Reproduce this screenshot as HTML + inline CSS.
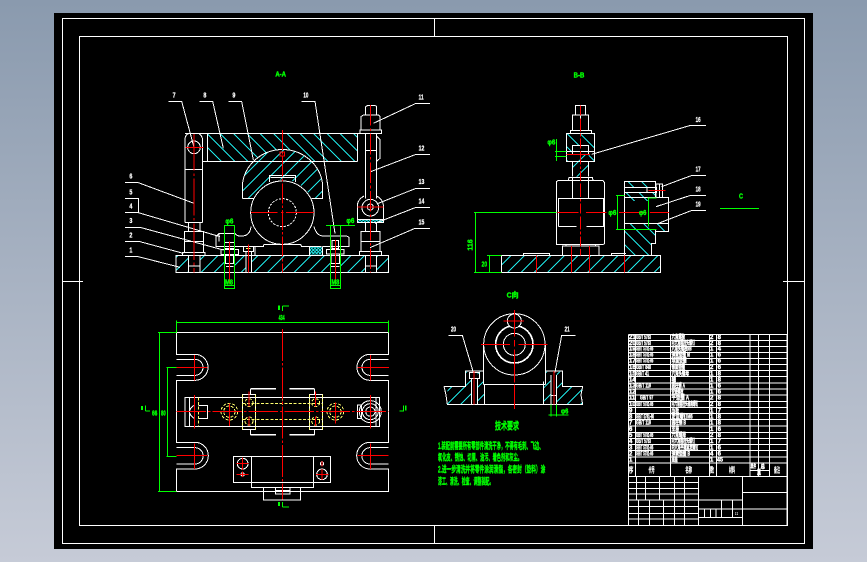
<!DOCTYPE html>
<html lang="zh"><head><meta charset="utf-8"><title>CAD</title>
<style>
html,body{margin:0;padding:0;width:867px;height:562px;overflow:hidden;background:linear-gradient(#8a9aae,#c6cbd7)}
svg{position:absolute;left:0;top:0;display:block;shape-rendering:crispEdges}
.w{stroke:#fff;fill:none;stroke-width:3}
.c{stroke:#1fe6e6;fill:none;stroke-width:3}
.r{stroke:#f00;fill:none;stroke-width:3}
.g{stroke:#0f0;fill:none;stroke-width:3}
.y{stroke:#ffff70;fill:none;stroke-width:3;stroke-dasharray:9 5}
.rd{stroke-dasharray:110 8 8 8}
text{font-family:"Liberation Sans","Noto Sans CJK SC",sans-serif;font-weight:bold}
.tg{fill:#0f0;font-size:22px;stroke:#0f0;stroke-width:1.2}
.tw{fill:#fff;font-size:22px;stroke:#fff;stroke-width:.8}
.b{fill:#fff;font-size:18px;stroke:#fff;stroke-width:1.2}
</style></head><body>
<svg width="867" height="562" viewBox="0 0 867 562" xmlns="http://www.w3.org/2000/svg">
<defs>
<path id="Lf" class="c" d="M160 200l-460 460M200 200l-460 460M240 200l-460 460M280 200l-460 460M320 200l-460 460M360 200l-460 460M400 200l-460 460M440 200l-460 460M480 200l-460 460M520 200l-460 460M560 200l-460 460M600 200l-460 460M640 200l-460 460M680 200l-460 460M720 200l-460 460M760 200l-460 460M800 200l-460 460M840 200l-460 460M880 200l-460 460M920 200l-460 460M960 200l-460 460M1000 200l-460 460M1040 200l-460 460M1080 200l-460 460M1120 200l-460 460M1160 200l-460 460M1200 200l-460 460M1240 200l-460 460"/>
<path id="Lb" class="c" d="M120 200l460 460M160 200l460 460M200 200l460 460M240 200l460 460M280 200l460 460M320 200l460 460M360 200l460 460M400 200l460 460M440 200l460 460M480 200l460 460M520 200l460 460M560 200l460 460M600 200l460 460M640 200l460 460M680 200l460 460M720 200l460 460"/>
<pattern id="hx" width="10" height="10" patternUnits="userSpaceOnUse"><path d="M0 10L10 0M0 0L10 10" stroke="#1fe6e6" stroke-width="2.5"/></pattern>
<clipPath id="a1"><rect x="168" y="586" width="638" height="51"/></clipPath>
<clipPath id="a2"><rect x="262" y="220" width="450" height="84"/></clipPath>
<clipPath id="a3"><path d="M367 415V375A121 117 0 0 1 608 375V415H574A95 95 0 0 0 400 415Z"/></clipPath>
<clipPath id="b1"><rect x="184" y="586" width="478" height="51"/></clipPath>
<clipPath id="b2"><path d="M379 220H464V304H446V256H397V304H379Z"/></clipPath>
<clipPath id="b3"><rect x="397" y="283" width="49" height="67"/></clipPath>
<clipPath id="b4"><path d="M553 365H646V383H553ZM553 397H646V423H553Z"/></clipPath>
<clipPath id="b5"><path d="M553 490H686V515H646V550H634V585H553Z"/></clipPath>
<clipPath id="s1"><path d="M82 304H155V358H82ZM173 304H193V358H173ZM136 260H155V304H136ZM173 260H190V304H173Z"/></clipPath>
<clipPath id="s2"><path d="M370 304H393V358H370ZM410 304H488V358H410ZM376 260H393V304H376ZM410 260H428V304H410Z"/></clipPath>
</defs>
<rect x="54" y="13" width="759" height="536" fill="#000"/>
<g fill="none" stroke="#fff" stroke-width="1">
<path d="M62.5 18.500H804.500V543.500H62.500Z"/>
<path d="M79.500 36.500H787.500V525.500H79.500Z"/>
<path d="M434.500 18V36M434.500 525V543M62 281.500H83M783 281.500H804"/>
</g>

<!-- FRONT VIEW A-A -->
<g transform="translate(120 60) scale(.33333)">
<g clip-path="url(#a1)"><use href="#Lf"/></g>
<g clip-path="url(#a2)"><use href="#Lb"/></g>
<path d="M367 415V375A121 117 0 0 1 608 375V415H574A95 95 0 0 0 400 415Z" fill="#000"/>
<g clip-path="url(#a3)"><use href="#Lf"/></g>
<rect x="205" y="586" width="36" height="51" fill="#000"/>
<rect x="313" y="586" width="30" height="51" fill="#000"/>
<rect x="631" y="586" width="30" height="51" fill="#000"/>
<rect x="378" y="586" width="16" height="51" fill="#000"/>
<rect x="737" y="586" width="33" height="51" fill="#000"/>
<rect x="568" y="560" width="39" height="23" fill="url(#hx)"/>
<rect x="712" y="478" width="78" height="10" fill="url(#hx)"/>
<path class="w" d="M168 586H806V637H168Z"/>
<path class="w" d="M195 220H780M262 220V304M712 220V304M248 304H712"/>
<path class="w" d="M195 488V235Q197 222 210 220M248 488V238Q246 226 235 220M195 488H248M195 328H248"/>
<circle class="w" cx="222" cy="262" r="19"/>
<path class="w" d="M367 415H400M574 415H608V375A121 117 0 0 0 367 375V415"/>
<circle class="w" cx="487" cy="458" r="95"/>
<circle class="w" cx="487" cy="458" r="42" stroke-dasharray="7 4"/>
<path class="w" d="M448 366V347H527V366M452 352H523"/>
<path class="w" d="M393 500Q390 528 365 528Q352 530 345 520H298L288 530V560H345M345 560H430L432 553H542L545 560H605M582 500Q590 528 610 528H680L687 532V560H607"/>
<path class="w" d="M405 560V586M568 560V586M607 560V586M297 520V545"/>
<!-- right stud -->
<path class="w" d="M737 165V140L742 137H766L770 140V165M723 210V170L730 165H775L780 170V210M720 210H785V220H720ZM737 220V415M770 220V415M737 272H770M770 228L780 238V295L770 304"/>
<path class="w" d="M712 478V435Q714 418 732 408M790 478V435Q788 418 770 408M712 478H790V488H712Z"/>
<circle class="w" cx="751" cy="443" r="25"/>
<circle class="w" cx="751" cy="441" r="9"/>
<path class="w" d="M737 488V515M770 488V515M723 515H780V575H723ZM723 545H780M718 575H785V586H718ZM737 586V637M770 586V637M737 618H770"/>
<!-- left stud -->
<path class="w" d="M205 488V515M240 488V515M193 515H250V578H193ZM193 545H250M188 578H255V586H188ZM205 586V637M240 586V637M205 618H240"/>
<!-- bolts -->
<path class="w" d="M313 547H343V565H313ZM303 568H355V583H303ZM317 583V610H340V583M318 620H340"/>
<path class="w" d="M636 541H656V565H636ZM620 568H672V582H620ZM633 583V610H659V583M633 620H659"/>
<path class="w" d="M370 560H400V575H370ZM378 575V637M394 575V637"/>
<path class="y" d="M378 566H392" style="stroke-dasharray:none"/>
<!-- leaders -->
<path class="w" d="M145 124H185L222 262M238 124H278L310 265M325 124H365L400 300M545 124H585L645 520M930 130H888L760 190M930 283H888L752 335M930 385H888L770 432M930 442H888L765 490M930 505H885L750 563M15 368H55L222 430M15 415H55V458H15M55 458L300 530M15 502H60L310 570M15 545H60L190 580M15 590H55L180 622"/>
<!-- red -->
<path class="r" d="M487 210V637" stroke-dasharray="60 6 8 6"/>
<path class="r rd" d="M222 222V637"/>
<path class="r" d="M751 135V637" stroke-dasharray="62 8 8 8"/>
<path class="r" d="M197 262H250M393 458H473M483 458H490M498 458H582M712 441H790M328 545V670M646 540V670M385 553V637"/>
<rect x="480" y="276" width="14" height="12" fill="none" stroke="#f00" stroke-width="3"/>
<!-- green -->
<path class="g" d="M313 496H343V685H313ZM313 677H343M631 496V685H661V496M631 677H661M618 496H705"/>
<text class="tg" x="466" y="50" textLength="32" lengthAdjust="spacingAndGlyphs">A-A</text>
<text class="tg" x="316" y="490" textLength="24" lengthAdjust="spacingAndGlyphs">φ6</text>
<text class="tg" x="679" y="489" textLength="24" lengthAdjust="spacingAndGlyphs">φ6</text>
<text class="tg" x="315" y="674" textLength="24" lengthAdjust="spacingAndGlyphs">M8</text>
<text class="tg" x="634" y="674" textLength="24" lengthAdjust="spacingAndGlyphs">M8</text>
<text class="tw" x="158" y="112" textLength="9" lengthAdjust="spacingAndGlyphs">7</text><text class="tw" x="250" y="112" textLength="9" lengthAdjust="spacingAndGlyphs">8</text><text class="tw" x="337" y="112" textLength="9" lengthAdjust="spacingAndGlyphs">9</text>
<text class="tw" x="550" y="112" textLength="15" lengthAdjust="spacingAndGlyphs">10</text>
<text class="tw" x="896" y="119" textLength="15" lengthAdjust="spacingAndGlyphs">11</text>
<text class="tw" x="896" y="272" textLength="17" lengthAdjust="spacingAndGlyphs">12</text>
<text class="tw" x="896" y="372" textLength="17" lengthAdjust="spacingAndGlyphs">13</text>
<text class="tw" x="896" y="431" textLength="17" lengthAdjust="spacingAndGlyphs">14</text>
<text class="tw" x="896" y="493" textLength="17" lengthAdjust="spacingAndGlyphs">15</text>
<text class="tw" x="28" y="355" textLength="9" lengthAdjust="spacingAndGlyphs">6</text><text class="tw" x="28" y="403" textLength="9" lengthAdjust="spacingAndGlyphs">5</text><text class="tw" x="28" y="446" textLength="9" lengthAdjust="spacingAndGlyphs">4</text>
<text class="tw" x="28" y="489" textLength="9" lengthAdjust="spacingAndGlyphs">3</text><text class="tw" x="28" y="532" textLength="9" lengthAdjust="spacingAndGlyphs">2</text><text class="tw" x="28" y="578" textLength="9" lengthAdjust="spacingAndGlyphs">1</text>
</g>

<!-- SIDE VIEW B-B -->
<g transform="translate(440 60) scale(.33333)">
<g clip-path="url(#b1)"><use href="#Lf"/></g>
<g clip-path="url(#b2)"><use href="#Lb"/></g>
<g clip-path="url(#b3)"><use href="#Lf"/></g>
<g clip-path="url(#b4)"><use href="#Lb"/></g>
<g clip-path="url(#b5)"><use href="#Lb"/></g>
<path class="w" d="M184 586H662V637H184ZM250 586V580H329V586M514 586V580H558"/>
<path class="w" d="M367 586V558H477V586M378 558V553M466 558V553M349 553V365L355 361H385L387 352H457L459 361H488L494 368V550L490 553H352ZM386 361H459"/>
<path class="w" d="M355 500V415H491V500H440M410 500H355M397 415V352M446 415V352"/>
<path class="w" d="M379 220H464V304H379ZM397 304V350M446 304V350M397 283V256H446V283M380 274H464M397 210V165H446V210M391 210V220M455 210V220M391 211H455M407 165V137H437V165M421 165V210"/>
<path class="w" d="M553 585V365H646V412M553 383H646M553 397H646M553 412H686V515H646M553 490H686M553 508H646V550H634V585M621 383H650V397H621ZM648 372H668V412H648ZM658 372V412"/>
<path class="w" d="M798 196H752L455 283M798 346H756L665 380M798 406H752L648 440M798 451H756L650 492"/>
<path class="r" d="M421 137V586" stroke-dasharray="30 8 40 6 8 6"/>
<path class="r" d="M380 284H450M352 457H415M438 457H500M537 457H620M630 457H687M625 391H676M290 586V637M394 558V637M448 558V637M553 586V637"/>
<path class="g" d="M106 457V637M102 457H350M102 637H184M141 586H184M148 586V637M349 237V303M345 274H380M345 289H380M532 406V508M528 406H553M528 508H650M625 412V500M622 414H650M840 445H957"/>
<text class="tg" x="401" y="52" textLength="32" lengthAdjust="spacingAndGlyphs">B-B</text>
<text class="tg" x="322" y="254" textLength="24" lengthAdjust="spacingAndGlyphs">φ6</text>
<text class="tg" x="505" y="465" textLength="24" lengthAdjust="spacingAndGlyphs">φ6</text>
<text class="tg" x="597" y="465" textLength="22" lengthAdjust="spacingAndGlyphs">φ6</text>
<text class="tg" x="125" y="620" textLength="16" lengthAdjust="spacingAndGlyphs">20</text>
<text class="tg" transform="translate(98 572) rotate(-90)" textLength="34" lengthAdjust="spacingAndGlyphs">116</text>
<text class="tg" x="897" y="416" textLength="12" lengthAdjust="spacingAndGlyphs">C</text>
<text class="tw" x="767" y="186" textLength="15" lengthAdjust="spacingAndGlyphs">16</text>
<text class="tw" x="767" y="335" textLength="15" lengthAdjust="spacingAndGlyphs">17</text>
<text class="tw" x="767" y="395" textLength="15" lengthAdjust="spacingAndGlyphs">18</text>
<text class="tw" x="767" y="440" textLength="15" lengthAdjust="spacingAndGlyphs">19</text>
</g>

<!-- PLAN VIEW -->
<g transform="translate(130 300) scale(.33333)">
<path class="w" d="M139 97H775V163H720A39 39 0 0 0 720 241H775V427H720A40 40 0 0 0 720 507H775V574H139V507H195A40 40 0 0 0 195 427H139V241H195A39 39 0 0 0 195 163H139Z"/>
<path class="w" d="M139 178H195A24 24 0 0 1 195 226H139M139 443H195A24 24 0 0 1 195 492H139M775 178H720A24 24 0 0 0 720 226H775M775 443H720A24 24 0 0 0 720 492H775"/>
<path class="w" d="M165 292H749V380H165ZM178 292V380M205 316H233V355H205M192 316Q165 335 192 355M682 315H695V355H682ZM738 292V380"/>
<path class="w" d="M362 267H438M478 267H553M362 405H438M478 405H553M362 267V283M553 267V283M362 388V405M553 388V405M337 283H377V388H337ZM538 283H577V388H538Z"/>
<path d="M362 266H438M478 266H553M362 404H438M478 404H553" stroke="#fff" stroke-width="3"/>
<circle class="w" cx="721" cy="335" r="33"/><circle class="w" cx="721" cy="335" r="24"/><circle class="w" cx="721" cy="335" r="14"/>
<path class="y" d="M337 310H577M337 358H577M337 283V388M377 283V388M538 283V388M577 283V388M205 292V380M457 292V380"/>
<circle class="y" cx="298" cy="335" r="25"/><circle class="y" cx="298" cy="335" r="17"/>
<circle class="y" cx="616" cy="335" r="25"/><circle class="y" cx="616" cy="335" r="17"/>
<circle class="y" cx="357" cy="308" r="12"/><circle class="y" cx="357" cy="363" r="12"/>
<circle class="y" cx="557" cy="308" r="12"/><circle class="y" cx="557" cy="363" r="12"/>
<path class="w" d="M310 469H602V547H310ZM365 469V562H550V469M400 563H512V600H400ZM436 563V582H480V563M436 572H480"/>
<circle class="w" cx="338" cy="491" r="16"/><circle class="w" cx="576" cy="523" r="16"/>
<circle class="w" cx="338" cy="523" r="5"/><circle class="w" cx="576" cy="491" r="5"/>
<path class="r" d="M457 87V598" stroke-dasharray="96 6 8 6"/>
<path class="r" d="M140 335H775" stroke-dasharray="88 6 8 6"/>
<path class="r" d="M193 165V241M193 285V385M193 430V507M721 165V241M721 285V385M721 430V507M140 202H233M682 202H777M140 467H233M682 467H775M298 310V378M616 307V370M357 275V320M357 350V378M557 275V320M557 350V378M320 491H355M338 473V510M320 523H355M338 515V531M576 483V500M558 523H596M576 507V540"/>
<path class="g" d="M139 67H775M139 62V97M775 62V97M88 97V574M84 97H139M84 574H139M112 202V469M109 202H139M109 469H139M457 18H477M457 18V33M457 621H477M457 606V621M46 333H60M46 316V333M808 333H821V316"/>
<path d="M447 16V30M447 606V618M36 318V330M827 316V332" stroke="#0f0" stroke-width="5"/>
<text class="tg" x="446" y="60" textLength="18" lengthAdjust="spacingAndGlyphs">434</text>
<text class="tg" x="66" y="346" textLength="16" lengthAdjust="spacingAndGlyphs">66</text>
<text class="tg" x="93" y="346" textLength="14" lengthAdjust="spacingAndGlyphs">80</text>
</g>

<!-- SECTION C -->
<g transform="translate(420 285) scale(.33333)">
<g clip-path="url(#s1)"><use href="#Lf"/></g>
<g clip-path="url(#s2)"><use href="#Lf"/></g>
<circle class="w" cx="283" cy="178" r="92"/>
<circle class="w" cx="283" cy="178" r="57"/><circle class="w" cx="283" cy="178" r="55"/>
<circle class="w" cx="283" cy="178" r="33"/>
<circle cx="283" cy="108" r="21" fill="#000" stroke="#fff" stroke-width="3"/>
<path class="w" d="M190 178V298M376 178V298M190 298H376M193 298V358M370 290V358"/>
<path class="w" d="M72 304H136V258H190M376 258H428V304H488L483 330L488 358H82L78 330L72 304M155 282V358M173 282V358M393 270V358M410 270V358M393 332H410M148 262H178V280H148Z"/>
<path class="w" d="M85 151H127L160 262M467 151H425L405 262"/>
<path class="r" d="M283 75V372" stroke-dasharray="80 10 20 8 100 6"/>
<path class="r" d="M250 108H312M183 178H270M295 178H383M162 258V358M402 258V358"/>
<path class="g" d="M386 390H446M393 358V395M410 358V395"/>
<text class="tg" x="423" y="385" textLength="22" lengthAdjust="spacingAndGlyphs">φ6</text>
<text class="tg" x="260" y="38" textLength="36" lengthAdjust="spacingAndGlyphs">C向</text>
<text class="tw" x="93" y="139" textLength="15" lengthAdjust="spacingAndGlyphs">20</text>
<text class="tw" x="434" y="139" textLength="15" lengthAdjust="spacingAndGlyphs">21</text>
<text class="tg" x="225" y="434" style="font-size:30px" textLength="72" lengthAdjust="spacingAndGlyphs">技术要求</text>
<text class="tg" x="54" y="492" style="font-size:28px" textLength="316" lengthAdjust="spacingAndGlyphs">1.装配前需要所有零部件清洗干净，不得有毛刺、飞边、</text>
<text class="tg" x="54" y="527" style="font-size:28px" textLength="252" lengthAdjust="spacingAndGlyphs">氧化皮、锈蚀、切屑、油污、着色剂和灰尘。</text>
<text class="tg" x="54" y="562" style="font-size:28px" textLength="322" lengthAdjust="spacingAndGlyphs">2.进一步清洗并将零件涂润滑脂，各密封（垫料）涂</text>
<text class="tg" x="54" y="598" style="font-size:28px" textLength="166" lengthAdjust="spacingAndGlyphs">漆工、清洗、检查、调整装配。</text>
</g>

<!-- TABLE -->
<g transform="translate(620 325) scale(.33333)">
<path class="w" d="M25 28H501M25 46H501M25 64H501M25 83H501M25 100H501M25 119H501M25 137H501M25 155H501M25 174H501M25 192H501M25 210H501M25 229H501M25 247H501M25 266H501M25 284H501M25 303H501M25 322H501M25 340H501M25 359H501M25 377H501M25 396H501M25 414H501M25 454H501"/>
<path class="w" d="M25 28V600M46 28V454M151 28V454M268 28V454M289 28V454M390 28V454M415 28V454M448 28V454M501 28V600M390 436H448"/>
<path class="w" d="M25 473H235M25 490H235M25 507H235M25 525H235M25 545H235M25 565H235M25 582H235M49 454V525M76 454V525M118 454V525M163 454V525M193 454V525M55 525V600M88 525V600M130 525V600M163 525V600M193 525V600M235 454V600M367 454V600M235 525H367M235 552H367M235 577H367M304 525V577M337 525V577M253 552V577M271 552V577M288 552V577M367 502H501M367 552H501"/>
<g>
<text class="b" x="27" y="42">21</text><text class="b" x="48" y="42" textLength="45" lengthAdjust="spacingAndGlyphs">GB/T 5783</text><text class="b" x="155" y="42" textLength="40" lengthAdjust="spacingAndGlyphs">六角螺栓</text><text class="b" x="270" y="42">2</text><text class="b" x="293" y="42">8</text>
<text class="b" x="27" y="60">20</text><text class="b" x="48" y="60" textLength="45" lengthAdjust="spacingAndGlyphs">GB/T 5783</text><text class="b" x="155" y="60" textLength="70" lengthAdjust="spacingAndGlyphs">内六角圆柱头螺钉</text><text class="b" x="270" y="60">2</text><text class="b" x="293" y="60">8</text>
<text class="b" x="27" y="77">19</text><text class="b" x="48" y="77" textLength="52" lengthAdjust="spacingAndGlyphs">GB/T 5781-86</text><text class="b" x="155" y="77" textLength="60" lengthAdjust="spacingAndGlyphs">六角头螺栓M8</text><text class="b" x="270" y="77">1</text><text class="b" x="293" y="77">4</text>
<text class="b" x="27" y="95">18</text><text class="b" x="48" y="95" textLength="52" lengthAdjust="spacingAndGlyphs">GB/T 5781-86</text><text class="b" x="155" y="95" textLength="55" lengthAdjust="spacingAndGlyphs">弹簧垫圈 M</text><text class="b" x="270" y="95">1</text><text class="b" x="293" y="95">6</text>
<text class="b" x="27" y="113">17</text><text class="b" x="48" y="113" textLength="52" lengthAdjust="spacingAndGlyphs">GB/T 5781-86</text><text class="b" x="155" y="113" textLength="45" lengthAdjust="spacingAndGlyphs">球面垫圈</text><text class="b" x="270" y="113">1</text><text class="b" x="293" y="113">6</text>
<text class="b" x="27" y="132">16</text><text class="b" x="48" y="132" textLength="45" lengthAdjust="spacingAndGlyphs">GB/T 848</text><text class="b" x="155" y="132" textLength="40" lengthAdjust="spacingAndGlyphs">锥面垫圈</text><text class="b" x="270" y="132">2</text><text class="b" x="293" y="132">6</text>
<text class="b" x="27" y="151">15</text><text class="b" x="48" y="151" textLength="39" lengthAdjust="spacingAndGlyphs">GB/T 41</text><text class="b" x="155" y="151" textLength="52" lengthAdjust="spacingAndGlyphs">六角头螺母</text><text class="b" x="270" y="151">1</text><text class="b" x="293" y="151">8</text>
<text class="b" x="27" y="169">14</text><text class="b" x="155" y="169" textLength="13" lengthAdjust="spacingAndGlyphs">轴</text><text class="b" x="270" y="169">1</text><text class="b" x="293" y="169">8</text>
<text class="b" x="27" y="187">13</text><text class="b" x="48" y="187" textLength="45" lengthAdjust="spacingAndGlyphs">GB/T 119</text><text class="b" x="155" y="187" textLength="40" lengthAdjust="spacingAndGlyphs">圆柱销 A</text><text class="b" x="270" y="187">1</text><text class="b" x="293" y="187">6</text>
<text class="b" x="27" y="205">12</text><text class="b" x="155" y="205" textLength="35" lengthAdjust="spacingAndGlyphs">铰链螺栓</text><text class="b" x="270" y="205">1</text><text class="b" x="293" y="205">6</text>
<text class="b" x="27" y="224">11</text><text class="b" x="60" y="224" textLength="40" lengthAdjust="spacingAndGlyphs">GB/T 97</text><text class="b" x="155" y="224" textLength="52" lengthAdjust="spacingAndGlyphs">平垫圈 A</text><text class="b" x="270" y="224">2</text><text class="b" x="293" y="224">8</text>
<text class="b" x="27" y="243">10</text><text class="b" x="48" y="243" textLength="52" lengthAdjust="spacingAndGlyphs">GB/T 5781-86</text><text class="b" x="155" y="243" textLength="80" lengthAdjust="spacingAndGlyphs">内六角圆柱头轴肩螺钉</text><text class="b" x="270" y="243">2</text><text class="b" x="293" y="243">8</text>
<text class="b" x="27" y="262">9</text><text class="b" x="155" y="262" textLength="22" lengthAdjust="spacingAndGlyphs">压板</text><text class="b" x="270" y="262">1</text><text class="b" x="293" y="262">7</text>
<text class="b" x="27" y="280">8</text><text class="b" x="48" y="280" textLength="54" lengthAdjust="spacingAndGlyphs">GB/T 5781-86</text><text class="b" x="155" y="280" textLength="63" lengthAdjust="spacingAndGlyphs">定位螺钉M6</text><text class="b" x="270" y="280">1</text><text class="b" x="293" y="280">8</text>
<text class="b" x="27" y="299">7</text><text class="b" x="48" y="299" textLength="45" lengthAdjust="spacingAndGlyphs">GB/T 119</text><text class="b" x="155" y="299" textLength="43" lengthAdjust="spacingAndGlyphs">圆柱销 B</text><text class="b" x="270" y="299">1</text><text class="b" x="293" y="299">8</text>
<text class="b" x="27" y="318">6</text><text class="b" x="155" y="318" textLength="22" lengthAdjust="spacingAndGlyphs">支座</text><text class="b" x="270" y="318">1</text><text class="b" x="293" y="318">6</text>
<text class="b" x="27" y="336">5</text><text class="b" x="48" y="336" textLength="52" lengthAdjust="spacingAndGlyphs">GB/T 5781-86</text><text class="b" x="155" y="336" textLength="43" lengthAdjust="spacingAndGlyphs">六角螺母</text><text class="b" x="270" y="336">2</text><text class="b" x="293" y="336">8</text>
<text class="b" x="27" y="354">4</text><text class="b" x="48" y="354" textLength="45" lengthAdjust="spacingAndGlyphs">GB/T 5783</text><text class="b" x="155" y="354" textLength="70" lengthAdjust="spacingAndGlyphs">内六角圆柱头螺钉</text><text class="b" x="270" y="354">1</text><text class="b" x="293" y="354">7</text>
<text class="b" x="27" y="373">3</text><text class="b" x="48" y="373" textLength="52" lengthAdjust="spacingAndGlyphs">GB/T 5781-86</text><text class="b" x="155" y="373" textLength="80" lengthAdjust="spacingAndGlyphs">内六角平端紧定螺钉</text><text class="b" x="270" y="373">1</text><text class="b" x="293" y="373">6</text>
<text class="b" x="27" y="391">2</text><text class="b" x="48" y="391" textLength="52" lengthAdjust="spacingAndGlyphs">GB/T 5781-86</text><text class="b" x="155" y="391" textLength="55" lengthAdjust="spacingAndGlyphs">弹簧垫圈 B</text><text class="b" x="270" y="391">4</text><text class="b" x="293" y="391">6</text>
<text class="b" x="27" y="410">1</text><text class="b" x="155" y="410" textLength="18" lengthAdjust="spacingAndGlyphs">底座</text><text class="b" x="270" y="410">1</text><text class="b" x="291" y="410" textLength="18" lengthAdjust="spacingAndGlyphs">45</text>
<text class="tw" x="26" y="443" textLength="14" lengthAdjust="spacingAndGlyphs">序</text>
<text class="tw" x="86" y="443" textLength="18" lengthAdjust="spacingAndGlyphs">代号</text>
<text class="tw" x="196" y="443" textLength="20" lengthAdjust="spacingAndGlyphs">名称</text>
<text class="tw" x="270" y="443" textLength="12" lengthAdjust="spacingAndGlyphs">数</text>
<text class="tw" x="327" y="443" textLength="18" lengthAdjust="spacingAndGlyphs">材料</text>
<text class="b" x="392" y="431" textLength="16" lengthAdjust="spacingAndGlyphs">单件</text>
<text class="b" x="422" y="431" textLength="13" lengthAdjust="spacingAndGlyphs">总</text>
<text class="b" x="411" y="449" textLength="12" lengthAdjust="spacingAndGlyphs">重</text>
<text class="tw" x="462" y="443" textLength="18" lengthAdjust="spacingAndGlyphs">备注</text>
<text x="345" y="570" fill="#fff" style="font-size:15px" textLength="9" lengthAdjust="spacingAndGlyphs">1:1</text>
</g>
</g>
</svg>
</body></html>
